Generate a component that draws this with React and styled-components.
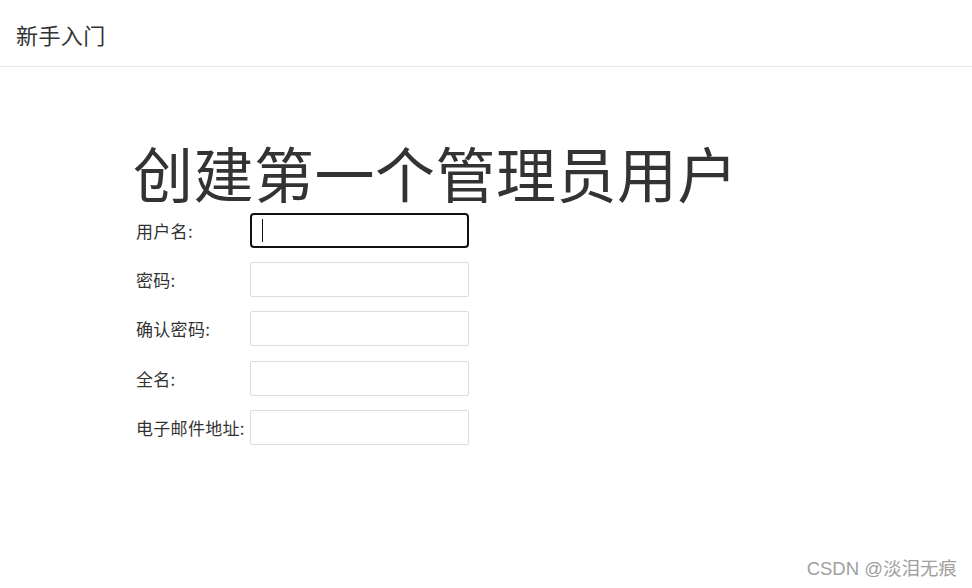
import React from 'react';
import { styled, createGlobalStyle } from 'styled-components';

const GlobalStyle = createGlobalStyle`
  html, body {
    margin: 0;
    padding: 0;
    background: #fff;
    font-family: 'Noto Sans CJK SC', 'Noto Sans', sans-serif;
    color: #333;
  }
`;

const fields = [
  { label: '用户名:', type: 'text', active: true },
  { label: '密码:', type: 'password' },
  { label: '确认密码:', type: 'password' },
  { label: '全名:', type: 'text' },
  { label: '电子邮件地址:', type: 'email' },
];

const App = () => {
  return (
    <Page>
      <GlobalStyle />
      <Header>
        <Brand>新手入门</Brand>
      </Header>
      <Main>
        <Title>创建第一个管理员用户</Title>
        <Form>
          {fields.map((f) => (
            <Row key={f.label}>
              <Label>{f.label}</Label>
              <Field>
                <Input type={f.type} $active={f.active} readOnly />
                {f.active && <Caret />}
              </Field>
            </Row>
          ))}
        </Form>
      </Main>
      <Watermark>CSDN @淡泪无痕</Watermark>
    </Page>
  );
};

const Page = styled.div`
  position: relative;
  width: 972px;
  height: 588px;
  overflow: hidden;
`;

const Header = styled.div`
  height: 67px;
  border-bottom: 1px solid #e5e5e5;
  display: flex;
  align-items: center;
  padding-left: 16px;
  box-sizing: border-box;
`;

const Brand = styled.div`
  font-size: 22px;
  letter-spacing: 0.4px;
  color: #333;
  margin-top: 1px;
`;

const Main = styled.div`
  padding: 71px 0 0 133px;
`;

const Title = styled.h1`
  margin: 0;
  font-size: 60px;
  font-weight: 400;
  line-height: 68px;
  color: #333;
  letter-spacing: 0.5px;
`;

const Form = styled.div`
  display: flex;
  flex-direction: column;
  gap: 14px;
  margin-top: 7px;
  padding-left: 3px;
`;

const Row = styled.div`
  display: flex;
  align-items: center;

  &:nth-child(n + 4) {
    margin-top: 0.5px;
  }
`;

const Label = styled.label`
  width: 114px;
  font-size: 17px;
  color: #333;
  letter-spacing: 0.3px;
  white-space: nowrap;
`;

const Field = styled.div`
  position: relative;
  width: 219px;
  height: 35px;
`;

const Input = styled.input`
  width: 100%;
  height: 100%;
  box-sizing: border-box;
  border: ${(p) => (p.$active ? '2px solid #111' : '1px solid #dcdcdc')};
  border-radius: ${(p) => (p.$active ? '4px' : '2px')};
  outline: none;
  background: #fff;
  font-size: 16px;
  padding: 0 10px;
`;

const Caret = styled.span`
  position: absolute;
  left: 12px;
  top: 6px;
  width: 1px;
  height: 23px;
  background: #111;
`;

const Watermark = styled.div`
  position: absolute;
  right: 15px;
  bottom: 8px;
  font-family: 'Liberation Sans', 'Noto Sans CJK SC', sans-serif;
  font-size: 18.5px;
  color: #a0a0a0;
`;

export default App;
